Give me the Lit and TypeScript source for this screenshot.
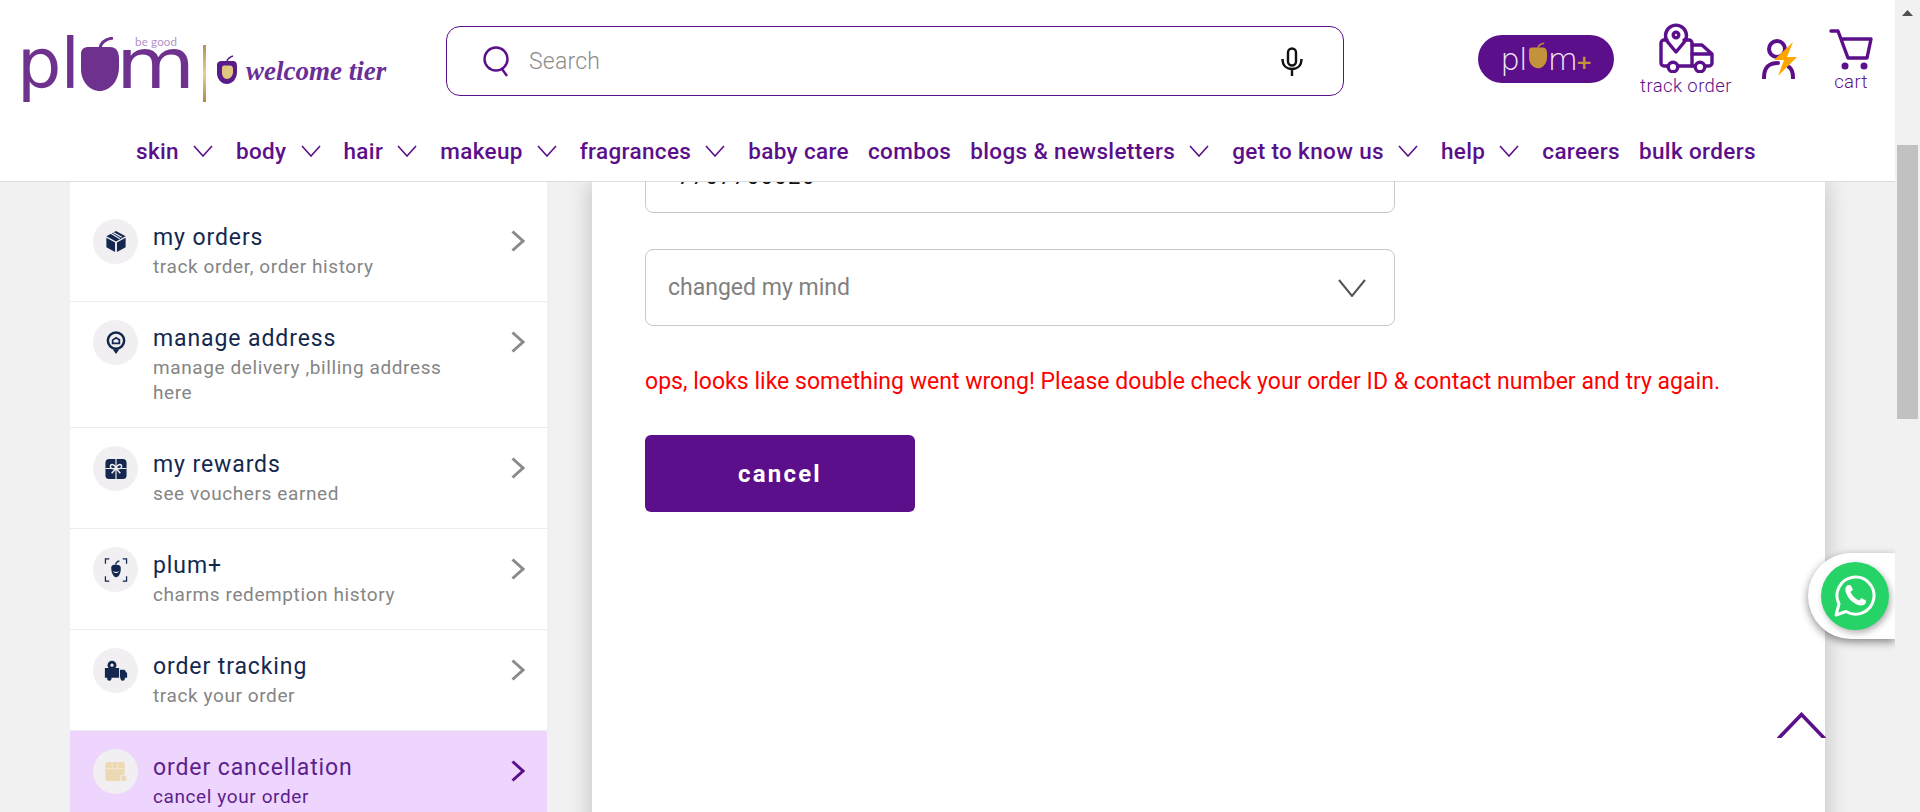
import { LitElement, css, html, svg } from "lit";
import { customElement } from "lit/decorators.js";

const navItems = [
  { label: "skin", caret: true },
  { label: "body", caret: true },
  { label: "hair", caret: true },
  { label: "makeup", caret: true },
  { label: "fragrances", caret: true },
  { label: "baby care", caret: false },
  { label: "combos", caret: false },
  { label: "blogs & newsletters", caret: true },
  { label: "get to know us", caret: true },
  { label: "help", caret: true },
  { label: "careers", caret: false },
  { label: "bulk orders", caret: false },
];

const navy = "#14284f";

const menuIcons = {
  box: svg`<path d="M12 1 22 6.5 12 12 2 6.5Z" fill="${navy}"/><path d="M2 8 11 13V23L2 18Z" fill="${navy}"/><path d="M22 8 13 13V23L22 18Z" fill="${navy}"/><path d="M6.5 3.5 16 9M9 2.5 18 7.5" stroke="#f1eff1" stroke-width="1.2"/>`,
  pin: svg`<circle cx="12" cy="10" r="8.5" fill="none" stroke="${navy}" stroke-width="2.6"/><path d="M8.5 19 12 24 15.5 19Z" fill="${navy}"/><path d="M8.5 13V9.5L12 7 15.5 9V13Z" fill="none" stroke="${navy}" stroke-width="1.8"/>`,
  gift: svg`<rect x="1" y="2" width="22" height="21" rx="4" fill="${navy}"/><path d="M1 12H23M12 2V23" stroke="#f1eff1" stroke-width="1.2"/><path d="M12 11C8 5 4.5 9 7 11.5 9 12.5 11 12 12 11 13 12 15 12.5 17 11.5 19.5 9 16 5 12 11ZM12 12 7.5 17M12 12 16.5 17" fill="none" stroke="#f1eff1" stroke-width="1.5"/>`,
  plum: svg`<path d="M1 6V1H5M19 1H23V6M1 19V24H5M19 24H23V19" fill="none" stroke="${navy}" stroke-width="1.3"/><path d="M7 10C7 7.5 9 7 12 7 15 7 17 7.5 17 11 17 16 15 20 12 20 9 20 7 15 7 10Z" fill="${navy}"/><path d="M11.5 7C12 4.5 13.5 3.5 15.5 3" fill="none" stroke="${navy}" stroke-width="1.2"/><path d="M9 13.5C10.5 15 13.5 15 15 13.5 14.5 16.5 9.5 16.5 9 13.5Z" fill="#f1eff1"/>`,
  truck: svg`<circle cx="9" cy="6" r="5" fill="${navy}"/><path d="M1 9H17V20H1ZM18 11H23L26 15V20H18Z" fill="${navy}"/><circle cx="6" cy="21" r="2.5" fill="${navy}"/><circle cx="21" cy="21" r="2.5" fill="${navy}"/><circle cx="9" cy="6" r="1.8" fill="#f1eff1"/>`,
  cancel: svg`<rect x="1" y="2" width="20" height="20" rx="2" fill="#ecd9b4"/><path d="M8 2V9M14 2V9M1 9H21" stroke="#f1e5cb" stroke-width="1.2"/><circle cx="20" cy="19" r="3.5" fill="#ecd9b4" stroke="#f1eff1"/>`,
};

const menu = [
  { icon: "box", title: "my orders", sub: "track order, order history" },
  { icon: "pin", title: "manage address", sub: "manage delivery ,billing address here" },
  { icon: "gift", title: "my rewards", sub: "see vouchers earned" },
  { icon: "plum", title: "plum+", sub: "charms redemption history" },
  { icon: "truck", title: "order tracking", sub: "track your order" },
  { icon: "cancel", title: "order cancellation", sub: "cancel your order", active: true },
] as const;

@customElement("app-root")
export class AppRoot extends LitElement {
  static styles = css`
    :host {
      display: flex;
      height: 812px;
      overflow: hidden;
      background: #f1f1f1;
      font-family: Roboto, "Noto Sans", sans-serif;
    }

    .page {
      position: relative;
      display: flex;
      flex-direction: column;
      width: 1895px;
      height: 812px;
      overflow: hidden;
    }

    .header {
      position: relative;
      z-index: 2;
      height: 181px;
      flex: none;
      background: #fff;
      border-bottom: 1px solid #dcdcdc;
    }

    .top {
      display: flex;
      align-items: center;
      height: 122px;
    }

    .brand {
      display: flex;
      align-items: center;
      width: 446px;
      padding-left: 23px;
      box-sizing: border-box;
      flex: none;
    }

    .logo {
      position: relative;
      display: flex;
      align-items: flex-start;
      width: 165px;
      height: 66px;
      margin-top: 16px;
      color: #6f318e;
      font-family: "DejaVu Sans", sans-serif;
    }

    .logo svg {
      margin: 1px 0 0 2px;
      flex: none;
    }

    .word {
      font-size: 70px;
      line-height: 66px;
      height: 66px;
      margin-top: -5px;
    }

    .word.pl {
      margin-left: -6px;
      letter-spacing: -1px;
    }

    .word.m {
      margin-left: -3px;
      transform: scaleX(1.16);
      transform-origin: left;
    }

    .good {
      position: absolute;
      left: 112px;
      top: -1px;
      font-family: Lato, sans-serif;
      font-size: 11.5px;
      color: #b48fca;
      letter-spacing: 0.2px;
    }

    .sep {
      width: 3px;
      height: 57px;
      margin: 24px 10px 0 15px;
      background: linear-gradient(#b8924f, #e6cf94 50%, #b08a45);
    }

    .tier {
      display: flex;
      align-items: center;
      gap: 8px;
      margin-top: 20px;
      color: #6a2f96;
      font: italic 700 27px "Liberation Serif", serif;
      white-space: nowrap;
    }

    .tier svg {
      margin-top: -4px;
    }

    .search {
      display: flex;
      align-items: center;
      width: 898px;
      height: 70px;
      box-sizing: border-box;
      padding: 0 39px 0 35px;
      border: 1.5px solid #5c0f8b;
      border-radius: 14px;
      flex: none;
    }

    .search span {
      flex: 1;
      margin-left: 17px;
      color: #8c8c8c;
      font-size: 23px;
      font-weight: 300;
      letter-spacing: 0.2px;
    }

    .actions {
      display: flex;
      align-items: flex-start;
      margin-left: 134px;
    }

    .plus {
      display: flex;
      align-items: center;
      justify-content: center;
      width: 136px;
      height: 48px;
      margin-top: 10px;
      border-radius: 24px;
      background: #5c0f8b;
      color: #f3e9f7;
      font-family: "DejaVu Sans", sans-serif;
      font-weight: 200;
      font-size: 31px;
      line-height: 48px;
      letter-spacing: -1px;
    }

    .plus svg {
      margin: -7px 1px 0 2px;
    }

    .plus b {
      margin: 6px 0 0 -1px;
      color: #c3933c;
      font-size: 20px;
      font-weight: 700;
    }

    .action {
      display: flex;
      flex-direction: column;
      align-items: center;
      color: #5c0f8b;
      font-size: 18.5px;
      font-weight: 300;
      letter-spacing: 0.4px;
      line-height: 22px;
    }

    .action.track {
      width: 92px;
      margin: -2px 0 0 26px;
    }

    .action.track svg {
      margin-bottom: 2px;
    }

    .action.user {
      margin: 14px 0 0 28px;
    }

    .action.cart {
      margin: 3px 0 0 30px;
    }

    .nav {
      display: flex;
      align-items: center;
      height: 58px;
      padding-left: 136px;
      gap: 19px;
      color: #5c0f8b;
      font-size: 22.5px;
      font-weight: 500;
      letter-spacing: 0.35px;
      white-space: nowrap;
    }

    .nav-item {
      display: flex;
      align-items: center;
    }

    .nav-item svg {
      margin: 0 4px 0 14px;
    }

    .body {
      flex: 1;
      display: flex;
      align-items: flex-start;
      min-height: 0;
      overflow: hidden;
    }

    .side {
      width: 477px;
      margin-left: 70px;
      padding-top: 19px;
      background: #fff;
      flex: none;
    }

    .item {
      display: flex;
      box-sizing: border-box;
      padding: 21px 22px 22px 23px;
      border-bottom: 1px solid #ececec;
    }

    .item.active {
      background: #eed5fd;
      border-bottom: 0;
    }

    .circle {
      display: flex;
      align-items: center;
      justify-content: center;
      width: 45px;
      height: 45px;
      margin: -3px 15px 0 0;
      border-radius: 50%;
      background: #f1eff1;
      flex: none;
    }

    .text {
      flex: 1;
    }

    .title {
      color: #14284f;
      font-size: 23px;
      line-height: 32px;
      letter-spacing: 0.9px;
    }

    .sub {
      max-width: 300px;
      color: #858585;
      font-size: 19px;
      line-height: 25px;
      letter-spacing: 0.6px;
    }

    .active .title,
    .active .sub {
      color: #5c1f8f;
    }

    .arrow {
      margin-top: 8px;
    }

    .panel {
      width: 1233px;
      height: 700px;
      margin-left: 45px;
      padding-left: 53px;
      box-sizing: border-box;
      background: #fff;
      box-shadow: 0 0 22px rgba(0, 0, 0, 0.22);
      flex: none;
    }

    .field {
      display: flex;
      align-items: center;
      justify-content: space-between;
      width: 750px;
      height: 77px;
      box-sizing: border-box;
      padding: 0 28px 0 22px;
      border: 1px solid #c8c8c8;
      border-radius: 8px;
      margin-bottom: 36px;
      color: #808080;
      font-size: 23px;
    }

    .field.phone {
      margin-top: -46px;
      padding: 3px 0 0 32px;
      color: #111;
      font-size: 22px;
      letter-spacing: 1.4px;
    }

    .error {
      margin-top: 40px;
      color: #ff0000;
      font-size: 23px;
      line-height: 32px;
      letter-spacing: 0.02px;
      white-space: nowrap;
    }

    .cancel {
      display: flex;
      align-items: center;
      justify-content: center;
      width: 270px;
      height: 77px;
      margin-top: 37px;
      border-radius: 6px;
      background: #5c0f8b;
      color: #fff;
      font-size: 24px;
      font-weight: 700;
      letter-spacing: 2.2px;
    }

    .wa {
      position: absolute;
      z-index: 3;
      left: 1808px;
      top: 553px;
      display: flex;
      align-items: center;
      width: 87px;
      height: 86px;
      padding-left: 13px;
      box-sizing: border-box;
      border-radius: 43px 0 0 43px;
      background: #fff;
      box-shadow: 0 3px 8px rgba(0, 0, 0, 0.45);
    }

    .wa-dot {
      display: flex;
      align-items: center;
      justify-content: center;
      width: 68px;
      height: 68px;
      border-radius: 50%;
      background: #25d366;
      box-shadow: 2px 3px 6px rgba(0, 0, 0, 0.3);
      flex: none;
    }

    .to-top {
      position: absolute;
      z-index: 3;
      left: 1777px;
      top: 712px;
    }

    .scrollbar {
      position: relative;
      width: 25px;
      height: 812px;
      background: #f1f1f1;
      flex: none;
    }

    .scroll-up {
      display: block;
      margin: 10px 0 0 7px;
    }

    .thumb {
      width: 21px;
      height: 274px;
      margin: 129px 0 0 2px;
      background: #c1c1c1;
    }
  `;

  private caret() {
    return html`<svg width="20" height="12" viewBox="0 0 20 12" fill="none" stroke="#5c0f8b" stroke-width="1.6"><path d="M1 1 10 11 19 1"/></svg>`;
  }

  private apple(w: number, h: number, fill: string) {
    return html`<svg width=${w} height=${h} viewBox="0 0 38 54">
      <path d="M0 17C0 11 4 10 8 10H29C35 10 38 14 38 22V30C38 45 28 54 19 54 8 54 0 44 0 32Z" fill=${fill} />
      <path d="M19 11C20 5 25 2 32 1" fill="none" stroke=${fill} stroke-width="3" />
    </svg>`;
  }

  private chevron(color: string) {
    return html`<svg class="arrow" width="14" height="22" viewBox="0 0 14 22" fill="none" stroke=${color} stroke-width="3"><path d="M1.5 1.5 12 11 1.5 20.5"/></svg>`;
  }

  render() {
    return html`<div class="page">
        <div class="header">
          <div class="top">
            <div class="brand">
              <div class="logo">
                <span class="word pl">pl</span>
                ${this.apple(38, 54, "#6f318e")}
                <span class="word m">m</span>
                <span class="good">be good</span>
              </div>
              <div class="sep"></div>
              <div class="tier">
                <svg width="22" height="29" viewBox="0 0 22 29">
                  <path d="M1 10C1 7 3 6 6 6H17C20 6 21 8 21 12V17C21 24 16 29 11 29 5 29 1 24 1 18Z" fill="#5b1a8a" />
                  <path d="M6 13C6 11 7 10.5 9 10.5H14C16 10.5 17 12 17 14V17C17 21 14 24 11 24 8 24 6 21 6 18Z" fill="#e0c67f" />
                  <path d="M11 6C12 3 14 2 17 1" fill="none" stroke="#5b1a8a" stroke-width="1.5" />
                </svg>
                welcome tier
              </div>
            </div>
            <div class="search">
              <svg width="30" height="31" viewBox="0 0 30 31" fill="none" stroke="#5c0f8b" stroke-width="2.4">
                <circle cx="14" cy="13" r="11.5" /><path d="M20 23 25 30" />
              </svg>
              <span>Search</span>
              <svg width="24" height="29" viewBox="0 0 24 29" fill="none" stroke="#111" stroke-width="2.4">
                <rect x="8" y="1.5" width="8" height="17" rx="4" /><path d="M2.5 12C2.5 18 6 22 12 22 18 22 21.5 18 21.5 12M12 22V29" />
              </svg>
            </div>
            <div class="actions">
              <div class="plus">
                <span>pl</span>
                ${this.apple(18, 27, "#c3933c")}
                <span>m</span><b>+</b>
              </div>
              <div class="action track">
                <svg width="55" height="50" viewBox="0 0 55 50" fill="none" stroke="#5c0f8b" stroke-width="3.4" stroke-linejoin="round" stroke-linecap="round">
                  <path d="M17 29 9.5 20A10.5 10.5 0 1 1 24.5 20Z" /><circle cx="17" cy="12" r="2.8" />
                  <path d="M8 17H5A3 3 0 0 0 2 20V40A3 3 0 0 0 5 43H9" /><path d="M25 17H30A3 3 0 0 1 33 20V43H20" />
                  <path d="M33 22H43L53 31V40A3 3 0 0 1 50 43H47M33 31H52M33 43H36" />
                  <circle cx="14" cy="44" r="4.8" /><circle cx="41" cy="44" r="4.8" />
                </svg>
                track order
              </div>
              <div class="action user">
                <svg width="38" height="40" viewBox="0 0 38 40">
                  <circle cx="17" cy="10" r="8" fill="none" stroke="#5c0f8b" stroke-width="4" />
                  <path d="M4 39C4 28 9 24 18 24M33 39C33 33 32 30 29 28" fill="none" stroke="#5c0f8b" stroke-width="4" stroke-linecap="round" />
                  <path d="M33 3 14 21 24 21 18 37 37 18 27 18Z" fill="#ffa500" />
                </svg>
              </div>
              <div class="action cart">
                <svg width="46" height="43" viewBox="0 0 46 43" fill="none" stroke="#5c0f8b" stroke-width="3.4" stroke-linecap="round" stroke-linejoin="round">
                  <path d="M3 3H10L20 30H39L43 11H13" />
                  <circle cx="17" cy="38" r="3.5" fill="#5c0f8b" stroke="none" /><circle cx="36" cy="38" r="3.5" fill="#5c0f8b" stroke="none" />
                </svg>
                cart
              </div>
            </div>
          </div>
          <div class="nav">
            ${navItems.map(
              (n) => html`<div class="nav-item">${n.label}${n.caret ? this.caret() : ""}</div>`
            )}
          </div>
        </div>
        <div class="body">
          <div class="side">
            ${menu.map(
              (m) => html`<div class="item ${"active" in m ? "active" : ""}">
                <div class="circle">
                  <svg width="24" height="24" viewBox="0 0 ${m.icon === "truck" ? 27 : 24} 25">${menuIcons[m.icon]}</svg>
                </div>
                <div class="text">
                  <div class="title">${m.title}</div>
                  <div class="sub">${m.sub}</div>
                </div>
                ${this.chevron("active" in m ? "#5c0f8b" : "#8a8a8a")}
              </div>`
            )}
          </div>
          <div class="panel">
            <div class="field phone">7707700020</div>
            <div class="field">
              changed my mind
              <svg width="28" height="18" viewBox="0 0 28 18" fill="none" stroke="#555" stroke-width="2"><path d="M1 1 14 17 27 1" /></svg>
            </div>
            <div class="error">ops, looks like something went wrong! Please double check your order ID &amp; contact number and try again.</div>
            <div class="cancel">cancel</div>
          </div>
        </div>
        <div class="wa">
          <div class="wa-dot">
            <svg width="42" height="42" viewBox="0 0 42 42">
              <path d="M2 40 5 29A18.5 18.5 0 1 1 12 36.5Z" fill="none" stroke="#fff" stroke-width="3" stroke-linejoin="round" />
              <path d="M14 10C12 11 11 13 11.5 16 13 23 19 29 26 30.5 29 31 31 29.5 32 27.5L32 25.5 27.5 23 25 25.5C21.5 24 18 20.5 16.5 17L19 14.5 16.5 10Z" fill="#fff" />
            </svg>
          </div>
        </div>
        <svg class="to-top" width="49" height="26" viewBox="0 0 49 26" fill="none" stroke="#5c0f8b" stroke-width="3.6"><path d="M0 28 24.5 2.5 49 28" /></svg>
      </div>
      <div class="scrollbar">
        <svg class="scroll-up" width="11" height="6" viewBox="0 0 11 6"><path d="M0 6 5.5 0 11 6Z" fill="#505050" /></svg>
        <div class="thumb"></div>
      </div>`;
  }
}
